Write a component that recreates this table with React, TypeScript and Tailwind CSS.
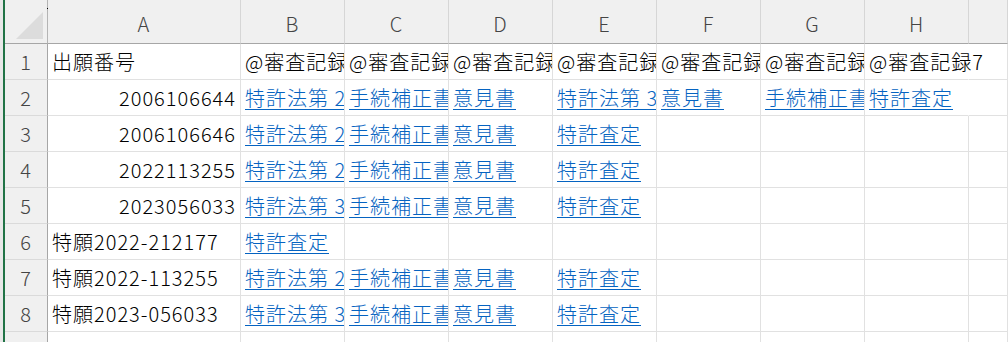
import React from 'react'

type Cell = { text: string; link?: boolean; right?: boolean }

const COLS = ['A', 'B', 'C', 'D', 'E', 'F', 'G', 'H', '']

const t = (text: string): Cell => ({ text })
const n = (text: string): Cell => ({ text, right: true })
const l = (text: string): Cell => ({ text, link: true })

const ROWS: Cell[][] = [
  [t('出願番号'), t('@審査記録1'), t('@審査記録2'), t('@審査記録3'), t('@審査記録4'), t('@審査記録5'), t('@審査記録6'), t('@審査記録7')],
  [n('2006106644'), l('特許法第 29 条'), l('手続補正書'), l('意見書'), l('特許法第 36 条'), l('意見書'), l('手続補正書'), l('特許査定')],
  [n('2006106646'), l('特許法第 29 条'), l('手続補正書'), l('意見書'), l('特許査定')],
  [n('2022113255'), l('特許法第 29 条'), l('手続補正書'), l('意見書'), l('特許査定')],
  [n('2023056033'), l('特許法第 36 条'), l('手続補正書'), l('意見書'), l('特許査定')],
  [t('特願2022-212177'), l('特許査定')],
  [t('特願2022-113255'), l('特許法第 29 条'), l('手続補正書'), l('意見書'), l('特許査定')],
  [t('特願2023-056033'), l('特許法第 36 条'), l('手続補正書'), l('意見書'), l('特許査定')],
  [],
]

function CornerCell() {
  return (
    <div className="relative bg-[#f0f0f0] border-r border-b border-r-[#b4b4b4] border-b-[#a6a6a6]">
      <svg className="absolute left-0 top-0" width="43" height="43" viewBox="0 0 43 43">
        <polygon points="11,39 38,39 38,12" fill="#dcdcdc" />
      </svg>
      <span className="absolute right-[-1px] top-[8px] w-[1px] h-[1px] bg-black" />
    </div>
  )
}

function ColHeader({ label }: { label: string }) {
  return (
    <div className="bg-[#f0f0f0] border-r border-b border-r-[#d6d6d6] border-b-[#a6a6a6] flex items-center justify-center pt-[5px] text-[20px] text-[#444]">
      {label}
    </div>
  )
}

function RowHeader({ num }: { num: number }) {
  return (
    <div className="bg-[#f0f0f0] border-r border-b border-r-[#a6a6a6] border-b-[#dadada] flex items-center justify-center pt-[1px] text-[20px] text-[#444]">
      {num}
    </div>
  )
}

// spill: the next cell is empty, so text runs over it as in Excel
function DataCell({ cell, spill }: { cell?: Cell; spill: boolean }) {
  return (
    <div
      className={`bg-white border-b border-[#e1e1e1] flex items-center whitespace-nowrap px-[4px] pt-[1px] text-[20px] ${
        spill ? 'relative z-10 overflow-visible border-r border-r-white' : 'overflow-hidden border-r'
      } ${cell?.right ? 'justify-end' : 'justify-start'}`}
    >
      {cell &&
        (cell.link ? (
          <span className="text-[#0563c1] underline underline-offset-[3px] decoration-1">{cell.text}</span>
        ) : (
          <span className="text-black">{cell.text}</span>
        ))}
    </div>
  )
}

export default function App() {
  return (
    <div className="h-[342px] w-[1008px] overflow-hidden flex bg-white font-['Noto_Sans_CJK_JP',sans-serif] font-light tracking-[1px] leading-none">
      <div className="w-[3px] bg-[#e8e8e8]" />
      <div className="w-[2px] bg-[#217346]" />
      <div className="flex-1 grid grid-cols-[43px_193px_104px_104px_104px_104px_104px_104px_104px_1fr] grid-rows-[44px_36px_36px_36px_36px_36px_36px_36px_36px_36px]">
        <CornerCell />
        {COLS.map((c, i) => (
          <ColHeader key={i} label={c} />
        ))}
        {ROWS.map((row, r) => (
          <React.Fragment key={r}>
            <RowHeader num={r + 1} />
            {COLS.map((_, c) => {
              const cell = row[c]
              const spill = !!cell && c === 7 && !row[c + 1]
              return <DataCell key={c} cell={cell} spill={spill} />
            })}
          </React.Fragment>
        ))}
      </div>
    </div>
  )
}
